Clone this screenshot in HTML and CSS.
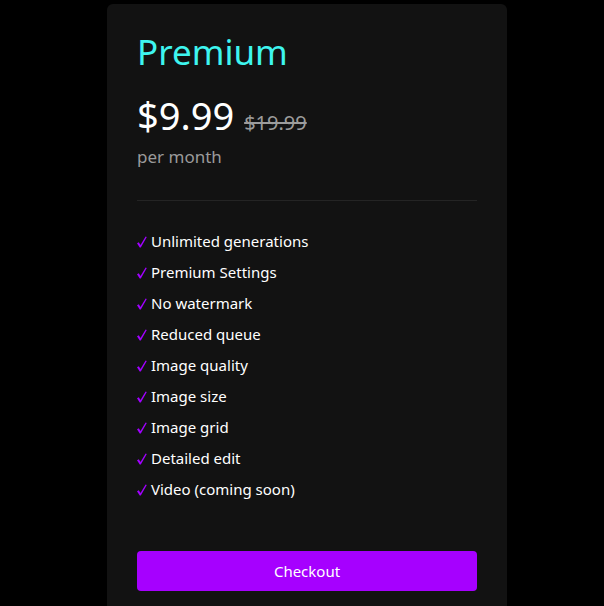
FILE: index.html
```html
<!DOCTYPE html>
<html lang="en">
<head>
<meta charset="utf-8">
<title>Premium</title>
<link rel="stylesheet" href="styles.css">
</head>
<body>
<div class="card">
  <h2 class="title">Premium</h2>
  <div class="price-row">
    <span class="price">$9.99</span>
    <span class="old-price">$19.99</span>
  </div>
  <div class="period">per month</div>
  <hr class="divider">
  <ul class="features">
    <li><svg class="check" viewBox="0 0 10 12"><path d="M0 7.2 L1.8 6.2 L3.5 9 L8.6 0.6 L9.8 1.1 L3.8 11.6 L2.7 11.6 Z"/></svg>Unlimited generations</li>
    <li><svg class="check" viewBox="0 0 10 12"><path d="M0 7.2 L1.8 6.2 L3.5 9 L8.6 0.6 L9.8 1.1 L3.8 11.6 L2.7 11.6 Z"/></svg>Premium Settings</li>
    <li><svg class="check" viewBox="0 0 10 12"><path d="M0 7.2 L1.8 6.2 L3.5 9 L8.6 0.6 L9.8 1.1 L3.8 11.6 L2.7 11.6 Z"/></svg>No watermark</li>
    <li><svg class="check" viewBox="0 0 10 12"><path d="M0 7.2 L1.8 6.2 L3.5 9 L8.6 0.6 L9.8 1.1 L3.8 11.6 L2.7 11.6 Z"/></svg>Reduced queue</li>
    <li><svg class="check" viewBox="0 0 10 12"><path d="M0 7.2 L1.8 6.2 L3.5 9 L8.6 0.6 L9.8 1.1 L3.8 11.6 L2.7 11.6 Z"/></svg>Image quality</li>
    <li><svg class="check" viewBox="0 0 10 12"><path d="M0 7.2 L1.8 6.2 L3.5 9 L8.6 0.6 L9.8 1.1 L3.8 11.6 L2.7 11.6 Z"/></svg>Image size</li>
    <li><svg class="check" viewBox="0 0 10 12"><path d="M0 7.2 L1.8 6.2 L3.5 9 L8.6 0.6 L9.8 1.1 L3.8 11.6 L2.7 11.6 Z"/></svg>Image grid</li>
    <li><svg class="check" viewBox="0 0 10 12"><path d="M0 7.2 L1.8 6.2 L3.5 9 L8.6 0.6 L9.8 1.1 L3.8 11.6 L2.7 11.6 Z"/></svg>Detailed edit</li>
    <li><svg class="check" viewBox="0 0 10 12"><path d="M0 7.2 L1.8 6.2 L3.5 9 L8.6 0.6 L9.8 1.1 L3.8 11.6 L2.7 11.6 Z"/></svg>Video (coming soon)</li>
  </ul>
  <button class="checkout">Checkout</button>
</div>
</body>
</html>
```
FILE: styles.css
```css
html, body {
  margin: 0;
  padding: 0;
  background: #000;
  height: 100%;
  overflow: hidden;
}
body {
  padding-left: 10px;
  box-sizing: border-box;
  font-family: "Noto Sans", "DejaVu Sans", sans-serif;
  color: #fff;
}
.card {
  width: 340px;
  margin: 4px auto 0;
  padding: 27px 30px 40px;
  background: #121212;
  border-radius: 6px;
}
.title {
  margin: 0;
  font-size: 35px;
  line-height: 42px;
  font-weight: 400;
  color: #3ef5ef;
}
.price-row {
  margin-top: 20px;
  display: flex;
  align-items: baseline;
  gap: 10px;
}
.price {
  font-size: 38px;
  line-height: 44px;
}
.old-price {
  font-size: 20px;
  color: #9c9c9c;
  text-decoration: line-through;
}
.period {
  margin-top: 8px;
  font-size: 17px;
  line-height: 23px;
  color: #9a9a9a;
}
.divider {
  margin: 32px 0 0;
  border: 0;
  border-top: 1px solid #242424;
}
.features {
  list-style: none;
  margin: 30px 0 0;
  padding: 0;
  display: flex;
  flex-direction: column;
  gap: 11px;
}
.features li {
  font-size: 15px;
  line-height: 20px;
  display: flex;
  align-items: center;
}
.check {
  width: 10px;
  height: 12px;
  flex: none;
  fill: #a100ff;
  margin-right: 4px;
  margin-top: 1px;
}
.checkout {
  display: block;
  width: 100%;
  height: 40px;
  margin-top: 52px;
  border: 0;
  border-radius: 4px;
  background: #a600ff;
  color: #fff;
  font-family: inherit;
  font-size: 15px;
}
```
